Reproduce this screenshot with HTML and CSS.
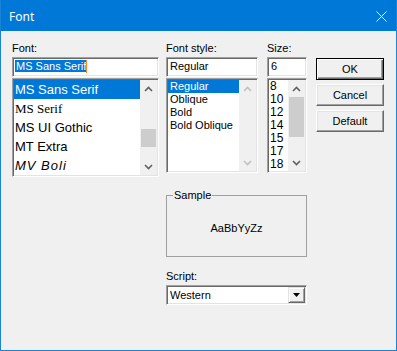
FILE: index.html
```html
<!DOCTYPE html>
<html lang="en">
<head>
  <meta charset="UTF-8" />
  <title>Font</title>
  <link rel="stylesheet" href="styles.css">
</head>
<body>

  <div class="dialog">
    <div class="titlebar">
      <span class="title">Font</span>
      <svg class="close" width="11" height="11" viewBox="0 0 11 11">
        <path d="M0.5 0.5 L10.5 10.5 M10.5 0.5 L0.5 10.5" stroke="#fff" stroke-width="1" fill="none"/>
      </svg>
    </div>

    <div class="client">
      <!-- font name -->
      <div class="col-font">
        <div class="label">Font:</div>
        <div class="edit"><span class="sel">MS Sans Serif</span><span class="caret"></span></div>
        <div class="listbox font-list">
          <ul class="items">
            <li class="selected f-sans">MS Sans Serif</li>
            <li class="f-serif">MS Serif</li>
            <li class="f-sans">MS UI Gothic</li>
            <li class="f-sans">MT Extra</li>
            <li class="f-boli">MV Boli</li>
          </ul>
          <div class="scrollbar">
            <div class="sb-btn"><svg width="9" height="6" viewBox="0 0 9 6"><path d="M1 5 L4.5 1.5 L8 5" class="chev"/></svg></div>
            <div class="sb-track"><div class="sb-thumb thumb-font"></div></div>
            <div class="sb-btn"><svg width="9" height="6" viewBox="0 0 9 6"><path d="M1 1 L4.5 4.5 L8 1" class="chev"/></svg></div>
          </div>
        </div>
      </div>

      <!-- style, size, sample, script -->
      <div class="col-mid">
        <div class="mid-row">
          <div class="col-style">
            <div class="label">Font style:</div>
            <div class="edit"><span class="txt">Regular</span></div>
            <div class="listbox small-list">
              <ul class="items">
                <li class="selected">Regular</li>
                <li>Oblique</li>
                <li>Bold</li>
                <li>Bold Oblique</li>
              </ul>
              <div class="scrollbar disabled">
                <div class="sb-btn"><svg width="9" height="6" viewBox="0 0 9 6"><path d="M1 5 L4.5 1.5 L8 5" class="chev"/></svg></div>
                <div class="sb-track"></div>
                <div class="sb-btn"><svg width="9" height="6" viewBox="0 0 9 6"><path d="M1 1 L4.5 4.5 L8 1" class="chev"/></svg></div>
              </div>
            </div>
          </div>

          <div class="col-size">
            <div class="label">Size:</div>
            <div class="edit"><span class="txt">6</span></div>
            <div class="listbox small-list size-list">
              <ul class="items">
                <li>8</li>
                <li>10</li>
                <li>12</li>
                <li>14</li>
                <li>15</li>
                <li>17</li>
                <li>18</li>
              </ul>
              <div class="scrollbar">
                <div class="sb-btn"><svg width="9" height="6" viewBox="0 0 9 6"><path d="M1 5 L4.5 1.5 L8 5" class="chev"/></svg></div>
                <div class="sb-track"><div class="sb-thumb thumb-size"></div></div>
                <div class="sb-btn"><svg width="9" height="6" viewBox="0 0 9 6"><path d="M1 1 L4.5 4.5 L8 1" class="chev"/></svg></div>
              </div>
            </div>
          </div>
        </div>

        <fieldset class="sample">
          <legend>Sample</legend>
          <div class="sample-text">AaBbYyZz</div>
        </fieldset>

        <div class="label script-label">Script:</div>
        <div class="combo">
          <span class="combo-text">Western</span>
          <div class="combo-btn"><svg width="7" height="4" viewBox="0 0 7 4"><path d="M0 0 H7 L3.5 4 Z" fill="#000"/></svg></div>
        </div>
      </div>

      <!-- buttons -->
      <div class="col-buttons">
        <button class="btn btn-default">OK</button>
        <button class="btn">Cancel</button>
        <button class="btn">Default</button>
      </div>
    </div>
  </div>

</body>
</html>
```

FILE: styles.css
```css
* {
  box-sizing: border-box;
}

body {
  margin: 0;
  background: #fff;
  font-family: "Liberation Sans", Arial, sans-serif;
  font-size: 11px;
  color: #000;
}

.dialog {
  width: 397px;
  height: 351px;
  border: 1px solid #1883d7;
  border-top-color: #0078d7;
  background: #f0f0f0;
  display: flex;
  flex-direction: column;
}

.titlebar {
  height: 30px;
  flex: none;
  background: #0078d7;
  color: #fff;
  display: flex;
  align-items: center;
  justify-content: space-between;
  padding: 0 9px 0 8px;
}

.title {
  font-family: "Noto Sans", sans-serif;
  font-size: 12px;
}

.client {
  display: flex;
  padding: 11px 0 0 11px;
}

.label {
  height: 13px;
  line-height: 13px;
  white-space: nowrap;
}

/* sunken 3d fields */
.edit, .listbox, .combo {
  background: #fff;
  border: 1px solid;
  border-color: #a0a0a0 #fff #fff #a0a0a0;
  box-shadow: inset 1px 1px #696969, inset -1px -1px #e3e3e3;
}

.edit {
  margin-top: 2px;
  height: 20px;
  padding: 2px 1px 0 2px;
  line-height: 13px;
  white-space: nowrap;
}

.edit .sel {
  background: #0078d7;
  color: #fff;
  padding: 0 0 0 1px;
}

.edit .caret {
  display: inline-block;
  width: 1px;
  height: 13px;
  vertical-align: top;
  background: #ff8728;
}

.edit .txt {
  padding-left: 1px;
}

.col-font {
  width: 147px;
}

.col-mid {
  width: 141px;
  margin-left: 7px;
}

.mid-row {
  display: flex;
  gap: 9px;
}

.col-style {
  width: 92px;
}

.col-size {
  width: 40px;
}

.col-buttons {
  width: 68px;
  margin-left: 9px;
  padding-top: 16px;
  display: flex;
  flex-direction: column;
  gap: 4px;
}

/* list boxes */
.listbox {
  margin-top: 1px;
  display: flex;
  padding: 1px;
}

.font-list {
  height: 99px;
}

.small-list {
  height: 95px;
}

.items {
  flex: 1;
  list-style: none;
  margin: 0;
  padding: 0;
  overflow: hidden;
}

.items li {
  white-space: nowrap;
  height: 13px;
  line-height: 13px;
  padding-left: 2px;
}

.font-list .items li {
  height: 19px;
  line-height: 19px;
  font-size: 13px;
  padding-left: 1px;
}

.size-list .items li {
  font-size: 12px;
  padding-left: 1px;
}

.items li.selected {
  background: #0078d7;
  color: #fff;
}

.f-serif {
  font-family: "Liberation Serif", serif;
}

.f-boli {
  font-style: italic;
  letter-spacing: 1px;
}

/* scroll bars */
.scrollbar {
  width: 17px;
  display: flex;
  flex-direction: column;
  background: #f0f0f0;
}

.sb-btn {
  height: 17px;
  display: flex;
  align-items: center;
  justify-content: center;
}

.chev {
  fill: none;
  stroke: #606060;
  stroke-width: 1.6;
}

.disabled .chev {
  stroke: #c0c0c0;
}

.sb-track {
  flex: 1;
}

.sb-thumb {
  background: #cdcdcd;
  margin: 0 1px;
}

.thumb-font {
  margin-top: 32px;
  height: 18px;
}

.thumb-size {
  height: 40px;
}

/* sample group */
.sample {
  margin: 16px 0 0;
  padding: 0;
  min-width: 0;
  border: 1px solid #a0a0a0;
}

.sample legend {
  margin-left: 6px;
  padding: 0 1px;
  line-height: 13px;
}

.sample-text {
  height: 54px;
  padding-top: 20px;
  text-align: center;
  line-height: 13px;
}

.script-label {
  margin-top: 13px;
}

/* combo box */
.combo {
  margin-top: 2px;
  height: 20px;
  display: flex;
  padding: 1px;
}

.combo-text {
  flex: 1;
  line-height: 17px;
  padding-left: 2px;
}

.combo-btn {
  width: 17px;
  height: 16px;
  background: #f0f0f0;
  border: 1px solid;
  border-color: #e3e3e3 #696969 #696969 #e3e3e3;
  box-shadow: inset 1px 1px #fff, inset -1px -1px #a0a0a0;
  display: flex;
  align-items: center;
  justify-content: center;
}

/* push buttons */
.btn {
  height: 22px;
  margin: 0;
  padding: 0;
  font-family: inherit;
  font-size: 11px;
  color: #000;
  background: #f0f0f0;
  border: 1px solid;
  border-color: #fff #696969 #696969 #fff;
  box-shadow: inset -1px -1px #a0a0a0, inset 1px 1px #e3e3e3;
}

.btn-default {
  border-color: #000;
  box-shadow: inset 1px 1px #fff, inset -1px -1px #696969, inset -2px -2px #a0a0a0;
}
```
